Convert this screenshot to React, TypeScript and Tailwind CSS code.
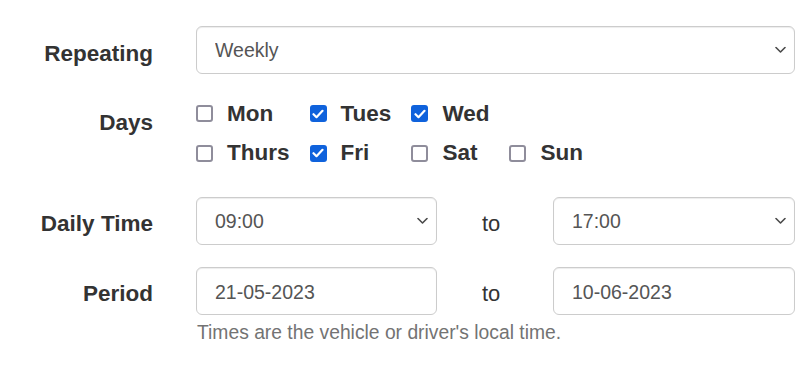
import React from 'react';

const days = [
  { label: 'Mon', checked: false },
  { label: 'Tues', checked: true },
  { label: 'Wed', checked: true },
  { label: '', checked: false },
  { label: 'Thurs', checked: false },
  { label: 'Fri', checked: true },
  { label: 'Sat', checked: false },
  { label: 'Sun', checked: false },
];

const Chevron = () => (
  <svg width="11" height="7" viewBox="0 0 11 7" fill="none" className="pointer-events-none absolute right-[9px] top-1/2 -translate-y-1/2">
    <path d="M1 1l4.5 4.5L10 1" stroke="#4a4a4a" strokeWidth="1.6" strokeLinecap="round" strokeLinejoin="round" />
  </svg>
);

const Select: React.FC<{ value: string; className?: string }> = ({ value, className = '' }) => (
  <div className={`relative ${className}`}>
    <select
      defaultValue={value}
      className="w-full h-[48px] appearance-none rounded-[6px] border border-[#cccccc] bg-white pl-[18px] pr-8 pt-[2px] text-[19.5px] text-[#555555] shadow-[inset_0_1px_1px_rgba(0,0,0,0.075)] outline-none"
    >
      <option>{value}</option>
    </select>
    <Chevron />
  </div>
);

const TextInput: React.FC<{ value: string; className?: string }> = ({ value, className = '' }) => (
  <input
    readOnly
    value={value}
    className={`h-[48px] min-w-0 rounded-[6px] border border-[#cccccc] bg-white pl-[18px] pt-[2px] text-[19.5px] text-[#555555] shadow-[inset_0_1px_1px_rgba(0,0,0,0.075)] outline-none ${className}`}
  />
);

const Checkbox: React.FC<{ checked: boolean }> = ({ checked }) =>
  checked ? (
    <span className="flex h-[17px] w-[17px] items-center justify-center rounded-[3px] bg-[#0f62dc]">
      <svg width="12" height="10" viewBox="0 0 12 10" fill="none">
        <path d="M1.5 5.2l3 3L10.5 1.8" stroke="white" strokeWidth="2.2" strokeLinecap="round" strokeLinejoin="round" />
      </svg>
    </span>
  ) : (
    <span className="h-[17px] w-[17px] rounded-[3px] border-2 border-[#8f8d9b] bg-white" />
  );

const Label: React.FC<{ children: React.ReactNode; className?: string }> = ({ children, className = '' }) => (
  <div className={`w-[153px] shrink-0 text-right text-[22.5px] font-bold leading-[32px] text-[#333333] ${className}`}>
    {children}
  </div>
);

export default function App() {
  return (
    <div className="min-h-screen bg-white pt-[26px] pr-3 font-['Liberation_Sans',Arial,sans-serif]">
      {/* Repeating */}
      <div className="flex items-center gap-[43px]">
        <Label className="pt-[8px]">Repeating</Label>
        <Select value="Weekly" className="flex-1" />
      </div>

      {/* Days */}
      <div className="mt-[20px] flex items-start gap-[43px]">
        <Label className="pt-[13px]">Days</Label>
        <div className="grid grid-cols-[auto_auto_auto_auto] gap-x-5">
          {days.map((d, i) =>
            d.label ? (
              <label key={i} className="flex h-[39.5px] items-center gap-[14px]">
                <Checkbox checked={d.checked} />
                <span className="text-[22.5px] font-bold text-[#333333]">{d.label}</span>
              </label>
            ) : (
              <span key={i} />
            )
          )}
        </div>
      </div>

      {/* Daily Time */}
      <div className="mt-[24px] flex items-center gap-[43px]">
        <Label className="pt-[6px]">Daily Time</Label>
        <div className="flex min-w-0 flex-1 items-center">
          <Select value="09:00" className="w-[241px]" />
          <div className="w-[116px] pl-[45px] pt-[6px] text-[22px] leading-[32px] text-[#333333]">to</div>
          <Select value="17:00" className="flex-1" />
        </div>
      </div>

      {/* Period */}
      <div className="mt-[22px] flex items-center gap-[43px]">
        <Label className="pt-[5px]">Period</Label>
        <div className="flex min-w-0 flex-1 items-center">
          <TextInput value="21-05-2023" className="w-[241px]" />
          <div className="w-[116px] pl-[45px] pt-[5px] text-[22px] leading-[32px] text-[#333333]">to</div>
          <TextInput value="10-06-2023" className="w-[242px]" />
        </div>
      </div>
      <div className="mt-[6px] pl-[197px] text-[19.3px] leading-[24px] text-[#737373]">
        Times are the vehicle or driver's local time.
      </div>
    </div>
  );
}
